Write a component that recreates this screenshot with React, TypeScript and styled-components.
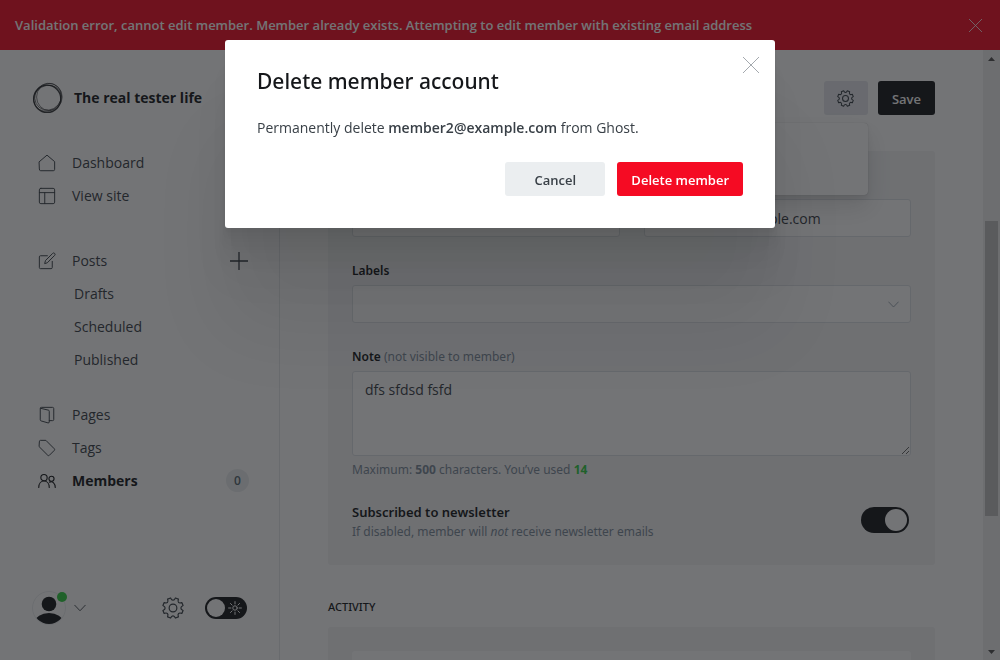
import React from "react";
import styled, { createGlobalStyle, css } from "styled-components";

const GlobalStyle = createGlobalStyle`
  *, *::before, *::after { box-sizing: border-box; }
  html, body { margin: 0; padding: 0; }
  body {
    font-family: "Open Sans", "Noto Sans", sans-serif;
    font-size: 14px;
    line-height: 20px;
    color: #394047;
    background: #fff;
  }
  button, input, textarea, select { font-family: inherit; }
  h1, h2, p, ul { margin: 0; padding: 0; }
  ul { list-style: none; }
`;

const textFont = css`
  font-family: "Noto Sans", "Open Sans", sans-serif;
`;

/* ---------- shell ---------- */

const Shell = styled.div`
  display: flex;
  flex-direction: column;
  height: 100vh;
  overflow: hidden;
`;

const AlertBar = styled.div`
  display: flex;
  align-items: center;
  justify-content: space-between;
  flex: none;
  height: 50px;
  padding: 0 18px 0 15px;
  background: #f50b23;
  color: #fff;
  font-size: 13px;
  font-weight: 600;
`;

const IconButton = styled.button`
  display: inline-flex;
  align-items: center;
  justify-content: center;
  padding: 0;
  border: 0;
  background: none;
  color: inherit;
  cursor: pointer;
`;

const Body = styled.div`
  display: flex;
  flex: 1;
  min-height: 0;
`;

/* ---------- sidebar ---------- */

const Sidebar = styled.nav`
  display: flex;
  flex-direction: column;
  flex: none;
  width: 280px;
  padding: 32px 31px 34px 32px;
  border-right: 1px solid #e6e9eb;
`;

const Brand = styled.div`
  display: flex;
  align-items: center;
  gap: 10px;
  height: 32px;
  margin-bottom: 32px;
  color: #15171a;
  font-size: 14px;
  font-weight: 700;
`;

const NavList = styled.ul`
  display: flex;
  flex-direction: column;
  margin-bottom: 32px;

  & + & + & { margin-top: -10px; }
`;

const NavItem = styled.li`
  display: flex;
  align-items: center;
  justify-content: space-between;
  height: 33px;
`;

const NavLink = styled.a<{ $active?: boolean; $sub?: boolean }>`
  display: flex;
  align-items: center;
  gap: 16px;
  padding-left: ${(p) => (p.$sub ? 42 : 6)}px;
  color: #394047;
  font-size: 14px;
  text-decoration: none;
  ${(p) =>
    p.$active &&
    css`
      color: #15171a;
      font-weight: 700;
    `}

  svg { width: 18px; height: 18px; }
`;

const Count = styled.span`
  display: flex;
  align-items: center;
  justify-content: center;
  width: 23px;
  height: 23px;
  margin-right: -1px;
  border-radius: 12px;
  background: #ebeef0;
  color: #54666f;
  font-size: 12px;
  font-weight: 600;
`;

const SidebarFooter = styled.div`
  display: flex;
  align-items: center;
  justify-content: space-between;
  height: 36px;
  margin-top: auto;
  padding-right: 1px;
`;

const FooterGroup = styled.div<{ $gap: number }>`
  display: flex;
  align-items: center;
  gap: ${(p) => p.$gap}px;
`;

const Avatar = styled.span`
  position: relative;
  display: flex;
  width: 34px;
  height: 34px;
`;

const OnlineDot = styled.span`
  position: absolute;
  top: 1px;
  right: -1px;
  width: 10px;
  height: 10px;
  border-radius: 50%;
  background: #30cf43;
`;

const NightSwitch = styled.label`
  position: relative;
  display: flex;
  align-items: center;
  justify-content: space-between;
  width: 42px;
  height: 22px;
  padding: 0 5px 0 2px;
  border-radius: 11px;
  background: #15171a;
  color: #fff;
`;

const HiddenCheckbox = styled.input`
  position: absolute;
  inset: 0;
  width: 100%;
  height: 100%;
  margin: 0;
  opacity: 0;
`;

const Knob = styled.span<{ $size: number }>`
  width: ${(p) => p.$size}px;
  height: ${(p) => p.$size}px;
  border-radius: 50%;
  background: #fff;
`;

/* ---------- member screen ---------- */

const Main = styled.main`
  flex: 1;
  min-width: 0;
  padding: 31px 48px 0;
  overflow: hidden;
`;

const Toolbar = styled.header`
  position: relative;
  display: flex;
  justify-content: flex-end;
  gap: 10px;
  margin-bottom: 36px;
`;

const Button = styled.button<{ $tone: "dark" | "grey" | "red" | "icon" }>`
  display: inline-flex;
  align-items: center;
  justify-content: center;
  height: 34px;
  padding: 1px 14px 0;
  border: 0;
  border-radius: 3px;
  font-size: 13px;
  font-weight: 600;
  white-space: nowrap;
  cursor: pointer;
  ${(p) =>
    ({
      dark: css`background: #15171a; color: #fff;`,
      grey: css`min-width: 100px; background: #ebeef0; color: #394047;`,
      red: css`min-width: 125px; background: #f50b23; color: #fff;`,
      icon: css`width: 44px; padding: 0; background: #e5e7ed; color: #394047;`,
    })[p.$tone]}
`;

const ActionsMenu = styled.div`
  position: absolute;
  top: 42px;
  right: 67px;
  width: 200px;
  height: 72px;
  border-radius: 4px;
  background: #fff;
  box-shadow: 0 0 1px rgba(0, 0, 0, 0.3), 0 4px 6px rgba(0, 0, 0, 0.06),
    0 12px 24px rgba(0, 0, 0, 0.12);
`;

const Panel = styled.section`
  display: flex;
  flex-direction: column;
  gap: 24px;
  padding: 48px 24px 24px;
  border-radius: 3px;
  background: #f4f5f6;
`;

const FieldRow = styled.div`
  display: grid;
  grid-template-columns: 1fr 1fr;
  gap: 24px;
`;

const Field = styled.div`
  position: relative;
  display: flex;
  flex-direction: column;
`;

const Label = styled.label`
  ${textFont}
  margin-bottom: 4px;
  color: #15171a;
  font-size: 12px;
  font-weight: 600;
  line-height: 20px;

  span { color: #7c8b9a; font-weight: 400; }
`;

const control = css`
  width: 100%;
  height: 38px;
  padding: 0 12px;
  border: 1px solid #dde1e5;
  border-radius: 3px;
  background: #fff;
  color: #394047;
  font-size: 14px;
  outline: none;
`;

const TextInput = styled.input`
  ${control}
`;

const Select = styled.select`
  ${control}
  appearance: none;
`;

const SelectArrow = styled.span`
  position: absolute;
  right: 12px;
  bottom: 13px;
  display: flex;
  color: #7c8b9a;
  pointer-events: none;
`;

const TextArea = styled.textarea`
  ${control}
  display: block;
  height: 85px;
  padding: 8px 12px;
  line-height: 20px;
  resize: vertical;
`;

const Hint = styled.p`
  ${textFont}
  margin-top: 2px;
  color: #7c8b9a;
  font-size: 12px;
  line-height: 18px;
`;

const NoteHint = styled(Hint)`
  margin-top: 5px;

  strong { font-weight: 700; }
  strong:last-child { color: #30cf43; }
`;

const ToggleRow = styled.div`
  display: flex;
  align-items: flex-start;
  justify-content: space-between;
`;

const ToggleTitle = styled.label`
  ${textFont}
  display: block;
  color: #15171a;
  font-size: 13px;
  font-weight: 600;
  line-height: 18px;
`;

const Toggle = styled.span`
  position: relative;
  display: flex;
  align-items: center;
  justify-content: flex-end;
  width: 48px;
  height: 26px;
  margin: 4px 2px 0 0;
  padding: 0 2px;
  border-radius: 13px;
  background: #15171a;
`;

const SectionTitle = styled.h2`
  ${textFont}
  margin: 32px 0 10px;
  color: #15171a;
  font-size: 11px;
  font-weight: 500;
  line-height: 20px;
  text-transform: uppercase;
`;

const ActivityPanel = styled(Panel)`
  padding: 24px;
`;

const ActivityList = styled.div`
  height: 120px;
  border-radius: 3px;
  background: #fff;
`;

/* ---------- scroll bar ---------- */

const ScrollBar = styled.div`
  display: flex;
  flex-direction: column;
  align-items: center;
  flex: none;
  width: 17px;
  background: #f1f1f1;
  color: #505050;
`;

const ScrollTrack = styled.div`
  display: flex;
  flex-direction: column;
  flex: 1;
  width: 13px;
`;

const ScrollSpace = styled.div<{ $share: number }>`
  flex: ${(p) => p.$share};
`;

const ScrollThumb = styled(ScrollSpace)`
  background: #c1c1c1;
`;

const ScrollArrow = styled.span`
  display: flex;
  align-items: center;
  justify-content: center;
  height: 17px;
`;

/* ---------- dialog ---------- */

const Overlay = styled.div`
  position: fixed;
  inset: 0;
  display: flex;
  align-items: flex-start;
  justify-content: center;
  padding: 40px 20px;
  background: rgba(21, 23, 26, 0.6);
`;

const Dialog = styled.div`
  position: relative;
  width: 100%;
  max-width: 550px;
  padding: 26px 32px 32px;
  border-radius: 3px;
  background: #fff;
  box-shadow: 0 4px 2px rgba(0, 0, 0, 0.02), 0 9px 5px rgba(0, 0, 0, 0.02),
    0 17px 10px rgba(0, 0, 0, 0.03), 0 31px 18px rgba(0, 0, 0, 0.03),
    0 50px 40px rgba(0, 0, 0, 0.04), 0 100px 80px rgba(0, 0, 0, 0.07);
`;

const DialogTitle = styled.h1`
  ${textFont}
  color: #15171a;
  font-size: 21px;
  font-weight: 500;
  line-height: 30px;
`;

const DialogText = styled.p`
  margin: 21px 0 23px;
  font-size: 14px;
  line-height: 22px;

  strong { font-weight: 600; }
`;

const DialogActions = styled.div`
  display: flex;
  justify-content: flex-end;
  gap: 12px;
`;

const DialogClose = styled(IconButton)`
  position: absolute;
  top: 17px;
  right: 16px;
  color: #8d9399;
`;

/* ---------- icons ---------- */

type IconProps = { size?: number; width?: number; children: React.ReactNode };

const Icon = ({ size = 18, width = 1.3, children }: IconProps) => (
  <svg
    width={size}
    height={size}
    viewBox="0 0 24 24"
    fill="none"
    stroke="currentColor"
    strokeWidth={width}
    strokeLinecap="round"
    strokeLinejoin="round"
    aria-hidden="true"
  >
    {children}
  </svg>
);

const Close = ({ size }: { size: number }) => (
  <svg width={size} height={size} viewBox={`0 0 ${size} ${size}`} stroke="currentColor" strokeWidth="0.8" aria-hidden="true">
    <path d={`M0 0L${size} ${size}M${size} 0L0 ${size}`} />
  </svg>
);

const gearPath = (teeth: number, outer: number, inner: number) => {
  const step = (Math.PI * 2) / teeth;
  const at = (r: number, a: number) =>
    `${(12 + r * Math.sin(a)).toFixed(2)} ${(12 - r * Math.cos(a)).toFixed(2)}`;
  let d = "";
  for (let i = 0; i < teeth; i++) {
    const a = i * step + step / 2;
    d += `${i ? "L" : "M"}${at(outer, a - step * 0.2)}`;
    d += `L${at(outer, a + step * 0.2)}`;
    d += `Q${at(inner, a + step * 0.28)} ${at(inner, a + step * 0.5)}`;
    d += `Q${at(inner, a + step * 0.72)} ${at(outer, a + step * 0.8)}`;
  }
  return d + "Z";
};

const Gear = ({ size, width }: { size: number; width: number }) => (
  <Icon size={size} width={width}>
    <path d={gearPath(8, 11.3, 8.6)} />
    <circle cx="12" cy="12" r="4.2" />
  </Icon>
);

const Chevron = ({ size, width = 1.8 }: { size: number; width?: number }) => (
  <Icon size={size} width={width}>
    <path d="M1.5 6.5L12 17.5L22.5 6.5" />
  </Icon>
);

const Logo = () => (
  <svg width="32" height="32" viewBox="0 0 32 32" fill="none" stroke="#15171a" aria-hidden="true">
    <circle cx="15.2" cy="16.8" r="13.6" strokeWidth="1.3" opacity="0.85" />
    <ellipse cx="17" cy="15.2" rx="13.8" ry="13" strokeWidth="0.9" opacity="0.6" transform="rotate(-50 16 16)" />
    <ellipse cx="17.4" cy="15" rx="12.8" ry="13.6" strokeWidth="0.9" opacity="0.6" />
    <ellipse cx="15.4" cy="16" rx="14.2" ry="12.6" strokeWidth="0.8" opacity="0.6" transform="rotate(-30 16 16)" />
  </svg>
);

const HomeIcon = () => (
  <Icon>
    <path d="M1.8 10.2L12 1.5L22.2 10.2V20.5A1.8 1.8 0 0 1 20.4 22.3H3.6A1.8 1.8 0 0 1 1.8 20.5Z" />
  </Icon>
);
const SiteIcon = () => (
  <Icon>
    <rect x="1.8" y="1.8" width="20.4" height="20.4" rx="2" />
    <path d="M1.8 7.5H22.2M9 7.5V22.2" />
  </Icon>
);
const PostsIcon = () => (
  <Icon>
    <path d="M12.5 5H3.3A1.5 1.5 0 0 0 1.8 6.5V20.7A1.5 1.5 0 0 0 3.3 22.2H17.5A1.5 1.5 0 0 0 19 20.7V12.5" />
    <path d="M9 15L10 11.3L19.5 1.9A1.8 1.8 0 0 1 22.2 4.5L12.8 14Z" />
  </Icon>
);
const PagesIcon = () => (
  <Icon>
    <path d="M3.2 3L13.8 5.5A1.5 1.5 0 0 1 15 7V21.3A1.3 1.3 0 0 1 13.3 22.5L4.2 19.9A1.5 1.5 0 0 1 3 18.5V3.5A1.7 1.7 0 0 1 4.7 1.8H19.3A1.7 1.7 0 0 1 21 3.5V18A1.5 1.5 0 0 1 19.5 19.5H15" />
  </Icon>
);
const TagIcon = () => (
  <Icon>
    <path d="M1.8 3.3A1.5 1.5 0 0 1 3.3 1.8H10.5L21.7 13A1.6 1.6 0 0 1 21.7 15.2L15.2 21.7A1.6 1.6 0 0 1 13 21.7L1.8 10.5Z" />
  </Icon>
);
const MembersIcon = () => (
  <Icon width={1.5}>
    <circle cx="8" cy="7.5" r="4.2" />
    <path d="M1 20.5C1 15.5 4 12 8 12S15 15.5 15 20.5" />
    <circle cx="18" cy="9" r="3.4" />
    <path d="M15.5 13.5C19.5 11.5 23 15.5 23 20.5" />
  </Icon>
);
const PlusIcon = () => (
  <svg width="18" height="18" viewBox="0 0 18 18" stroke="#394047" strokeWidth="1.3" aria-hidden="true">
    <path d="M9 0V18M0 9H18" />
  </svg>
);
const SunIcon = () => (
  <Icon size={14} width={1.7}>
    <circle cx="12" cy="12" r="3.8" />
    <path d="M12 1V5M12 19V23M1 12H5M19 12H23M4.2 4.2L7 7M17 17L19.8 19.8M4.2 19.8L7 17M17 7L19.8 4.2" />
  </Icon>
);
const Person = () => (
  <svg width="34" height="34" viewBox="0 0 34 34" aria-hidden="true">
    <defs>
      <clipPath id="avatar-clip">
        <circle cx="17" cy="17" r="16" />
      </clipPath>
    </defs>
    <circle cx="17" cy="17" r="16.5" fill="#fff" stroke="#ebeef0" />
    <g clipPath="url(#avatar-clip)" fill="#15171a">
      <circle cx="17" cy="13" r="7.3" />
      <ellipse cx="17" cy="31.5" rx="14" ry="9.5" />
    </g>
  </svg>
);

export default function App() {
  return (
    <>
      <GlobalStyle />
      <Shell>
        <AlertBar role="alert">
          <span>
            Validation error, cannot edit member. Member already exists. Attempting to edit member with
            existing email address
          </span>
          <IconButton aria-label="Dismiss">
            <Close size={13} />
          </IconButton>
        </AlertBar>
        <Body>
          <Sidebar>
            <Brand>
              <Logo />
              The real tester life
            </Brand>
            <NavList>
              <NavItem><NavLink href="#dashboard"><HomeIcon />Dashboard</NavLink></NavItem>
              <NavItem><NavLink href="#site"><SiteIcon />View site</NavLink></NavItem>
            </NavList>
            <NavList>
              <NavItem>
                <NavLink href="#posts"><PostsIcon />Posts</NavLink>
                <IconButton aria-label="New post"><PlusIcon /></IconButton>
              </NavItem>
              <NavItem><NavLink $sub href="#drafts">Drafts</NavLink></NavItem>
              <NavItem><NavLink $sub href="#scheduled">Scheduled</NavLink></NavItem>
              <NavItem><NavLink $sub href="#published">Published</NavLink></NavItem>
            </NavList>
            <NavList>
              <NavItem><NavLink href="#pages"><PagesIcon />Pages</NavLink></NavItem>
              <NavItem><NavLink href="#tags"><TagIcon />Tags</NavLink></NavItem>
              <NavItem>
                <NavLink $active href="#members"><MembersIcon />Members</NavLink>
                <Count>0</Count>
              </NavItem>
            </NavList>
            <SidebarFooter>
              <IconButton aria-label="Account menu">
                <FooterGroup $gap={8}>
                  <Avatar>
                    <Person />
                    <OnlineDot />
                  </Avatar>
                  <Chevron size={12} />
                </FooterGroup>
              </IconButton>
              <FooterGroup $gap={21}>
                <IconButton aria-label="Settings"><Gear size={22} width={1.3} /></IconButton>
                <NightSwitch>
                  <HiddenCheckbox type="checkbox" aria-label="Night shift" />
                  <Knob $size={18} />
                  <SunIcon />
                </NightSwitch>
              </FooterGroup>
            </SidebarFooter>
          </Sidebar>

          <Main>
            <Toolbar>
              <Button $tone="icon" aria-label="Member actions"><Gear size={17} width={1.5} /></Button>
              <Button $tone="dark">Save</Button>
              <ActionsMenu />
            </Toolbar>
            <Panel>
              <FieldRow>
                <TextInput aria-label="Name" />
                <TextInput aria-label="Email" type="email" defaultValue="member2@example.com" />
              </FieldRow>
              <Field>
                <Label htmlFor="labels">Labels</Label>
                <Select id="labels" defaultValue=""><option value="" /></Select>
                <SelectArrow><Chevron size={11} width={1.6} /></SelectArrow>
              </Field>
              <Field>
                <Label htmlFor="note">Note <span>(not visible to member)</span></Label>
                <TextArea id="note" defaultValue="dfs sfdsd fsfd" />
                <NoteHint>
                  Maximum: <strong>500</strong> characters. You’ve used <strong>14</strong>
                </NoteHint>
              </Field>
              <ToggleRow>
                <div>
                  <ToggleTitle htmlFor="newsletter">Subscribed to newsletter</ToggleTitle>
                  <Hint>If disabled, member will <em>not</em> receive newsletter emails</Hint>
                </div>
                <Toggle>
                  <HiddenCheckbox id="newsletter" type="checkbox" defaultChecked />
                  <Knob $size={22} />
                </Toggle>
              </ToggleRow>
            </Panel>
            <SectionTitle>Activity</SectionTitle>
            <ActivityPanel>
              <ActivityList />
            </ActivityPanel>
          </Main>

          <ScrollBar aria-hidden="true">
            <ScrollArrow>
              <svg width="7" height="4" viewBox="0 0 7 4"><path d="M0 4L3.5 0L7 4Z" fill="currentColor" /></svg>
            </ScrollArrow>
            <ScrollTrack>
              <ScrollSpace $share={154} />
              <ScrollThumb $share={295} />
              <ScrollSpace $share={127} />
            </ScrollTrack>
            <ScrollArrow>
              <svg width="7" height="4" viewBox="0 0 7 4"><path d="M0 0L3.5 4L7 0Z" fill="currentColor" /></svg>
            </ScrollArrow>
          </ScrollBar>
        </Body>
      </Shell>

      <Overlay>
        <Dialog role="dialog" aria-modal="true" aria-labelledby="dialog-title">
          <DialogTitle id="dialog-title">Delete member account</DialogTitle>
          <DialogClose aria-label="Close"><Close size={16} /></DialogClose>
          <DialogText>
            Permanently delete <strong>member2@example.com</strong> from Ghost.
          </DialogText>
          <DialogActions>
            <Button $tone="grey">Cancel</Button>
            <Button $tone="red">Delete member</Button>
          </DialogActions>
        </Dialog>
      </Overlay>
    </>
  );
}
